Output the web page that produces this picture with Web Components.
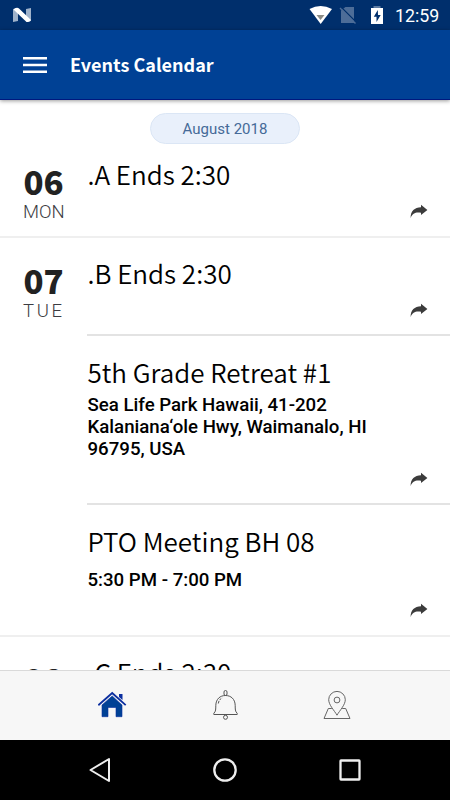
<!DOCTYPE html>
<html lang="en">
<head>
<meta charset="utf-8">
<title>Events Calendar</title>
<style>
    html, body {
        margin: 0;
        height: 100%;
        overflow: hidden;
        background: #fff;
    }
</style>
</head>
<body>
<calendar-app>
    <status-bar slot="top">12:59</status-bar>
    <app-header slot="top">Events Calendar</app-header>
    <month-pill>August 2018</month-pill>
    <event-day day="06" name="MON">
        <event-item heading=".A Ends 2:30"></event-item>
    </event-day>
    <event-day day="07" name="TUE" style="--name-spacing: 2.6px">
        <event-item heading=".B Ends 2:30" style="--pad-end: 16px"></event-item>
        <event-item heading="5th Grade Retreat #1" style="--pad-start: 18px; --pad-end: 16px">Sea Life Park Hawaii, 41-202 Kalaniana‘ole Hwy, Waimanalo, HI 96795, USA</event-item>
        <event-item heading="PTO Meeting BH 08" style="--pad-start: 18px; --detail-gap: 10px">5:30 PM - 7:00 PM</event-item>
    </event-day>
    <event-day day="08" name="WED">
        <event-item heading=".C Ends 2:30"></event-item>
    </event-day>
    <tab-bar slot="bottom"></tab-bar>
    <nav-bar slot="bottom"></nav-bar>
</calendar-app>

<script>
// attaches an open shadow root filled from a template
function render(el, html) {
    const template = document.createElement('template');
    template.innerHTML = html;
    el.attachShadow({mode: 'open'}).appendChild(template.content.cloneNode(true));
}

class CalendarApp extends HTMLElement {
    constructor() {
        super();
        render(this, `
            <style>
                :host {
                    display: flex;
                    flex-direction: column;
                    width: 450px;
                    height: 800px;
                    overflow: hidden;
                    background: #fff;
                    color: #000;
                    font-family: Roboto, sans-serif;
                }
                main {
                    flex: 1;
                    min-height: 0;
                    overflow: hidden;
                }
            </style>
            <slot name="top"></slot>
            <main><slot></slot></main>
            <slot name="bottom"></slot>`);
    }
}

class StatusBar extends HTMLElement {
    constructor() {
        super();
        render(this, `
            <style>
                :host {
                    display: flex;
                    align-items: center;
                    flex: none;
                    height: 30px;
                    box-sizing: border-box;
                    padding: 0 11px 0 12px;
                    background: #002f6c;
                    color: #fff;
                    font: 450 17.800px/30px Roboto, sans-serif;
                }
                .logo { margin-right: auto; }
                .clock { margin-left: 11px; padding-top: 2px; width: 44px; white-space: nowrap; }
                svg { display: block; }
            </style>
            <svg class="logo" width="22" height="30" viewBox="12 0 22 30">
                <path fill="#9fb2ca" d="M13 9l5-1v13l-5 1zM26 9l5-1v13l-5 1z"/>
                <path fill="#fff" d="M14 9q3-2 5-.5L31 20q-2 3-5 1.500L14 10z"/>
            </svg>
            <svg width="76" height="30" viewBox="308 0 76 30">
                <path fill="#fff" d="M309.500 9q11-6 22.500 0L320.700 24z"/>
                <path fill="#8c8c86" d="M316.500 15h8l-4 5z"/>
                <path fill="#4d6d98" d="M345.500 7h8.500v14.500zM341 11v12h11.500z"/>
                <path fill="#4d6d98" d="M342 9.500l3.500-2.500h8.500v16h-13V10.500z"/>
                <path fill="none" stroke="#002f6c" stroke-width="1.200" d="M342 8l14 14"/>
                <path fill="none" stroke="#4d6d98" stroke-width="1.400" d="M340 8l15.500 15.500"/>
                <path fill="#5d7ba2" d="M373.500 6h7v2h-7z"/>
                <path fill="#fff" d="M371 8h12v16h-12z"/>
                <path fill="#002f6c" d="M377.800 10l-4 6.800h2.700V22l4.200-7H378z"/>
            </svg>
            <span class="clock"><slot></slot></span>`);
    }
}

class AppHeader extends HTMLElement {
    constructor() {
        super();
        render(this, `
            <style>
                :host {
                    display: flex;
                    align-items: center;
                    flex: none;
                    position: relative;
                    z-index: 1;
                    box-sizing: border-box;
                    height: 70px;
                    padding-left: 23px;
                    gap: 23px;
                    background: #004195;
                    border-bottom: 1px solid #00187e;
                    box-shadow: 0 1px 4px rgba(0, 0, 0, .4);
                    color: #fff;
                    font: 700 18px/30px "Noto Sans CJK JP", sans-serif;
                }
                span { padding-bottom: 2px; }
            </style>
            <svg width="24" height="18" viewBox="0 0 24 18">
                <path fill="#fff" d="M0 1h24v2.500H0zM0 7.800h24v2.500H0zM0 14.600h24v2.500H0z"/>
            </svg>
            <span><slot></slot></span>`);
    }
}

class MonthPill extends HTMLElement {
    constructor() {
        super();
        render(this, `
            <style>
                :host {
                    display: block;
                    box-sizing: border-box;
                    width: 150px;
                    height: 31px;
                    margin: 13px auto -5px;
                    border: 1px solid #dbe6f5;
                    border-radius: 16px;
                    background: #e9f0fb;
                    color: #456a98;
                    font: 400 15px/31px Roboto, sans-serif;
                    text-align: center;
                }
            </style>
            <slot></slot>`);
    }
}

class EventDay extends HTMLElement {
    constructor() {
        super();
        render(this, `
            <style>
                :host {
                    display: flex;
                    border-bottom: 2px solid #efefef;
                }
                .date {
                    flex: none;
                    width: 87px;
                    box-sizing: border-box;
                    padding: 22px 0 0 23px;
                    color: #222;
                }
                .day {
                    width: 41px;
                    font: 900 33px/40px "Noto Sans CJK JP", sans-serif;
                    text-align: center;
                }
                .name {
                    margin-top: 1px;
                    color: #3c3c42;
                    font: 350 18.500px/20px Roboto, sans-serif;
                    letter-spacing: var(--name-spacing, 0);
                    white-space: nowrap;
                }
                .events {
                    flex: 1;
                    min-width: 0;
                }
                ::slotted(:not(:last-child)) {
                    border-bottom: 2px solid #e3e3e3;
                }
            </style>
            <div class="date">
                <div class="day">${this.getAttribute('day')}</div>
                <div class="name">${this.getAttribute('name')}</div>
            </div>
            <div class="events"><slot></slot></div>`);
    }
}

class EventItem extends HTMLElement {
    constructor() {
        super();
        render(this, `
            <style>
                :host {
                    display: block;
                    padding: var(--pad-start, 17px) 22px var(--pad-end, 17px) 0;
                }
                .heading {
                    padding-left: .4px;
                    font: 350 26px/36px "Noto Sans CJK JP", sans-serif;
                    white-space: nowrap;
                }
                .detail {
                    width: 300px;
                    padding-left: .5px;
                    margin-top: var(--detail-gap, 4px);
                    font: 500 18.650px/22px Roboto, sans-serif;
                }
                .share {
                    display: block;
                    margin: 12px 0 0 auto;
                }
            </style>
            <div class="heading">${this.getAttribute('heading')}</div>
            ${this.textContent.trim() ? '<div class="detail"><slot></slot></div>' : ''}
            <svg class="share" width="18" height="15" viewBox="0 0 18 15">
                <path fill="#3c3c3c" d="M.6 14C.6 7 4.500 3.500 11 3.300V.8l6.400 5.100-6.400 5V8.800C6 8 2.500 9 .6 14z"/>
            </svg>`);
    }
}

class TabBar extends HTMLElement {
    constructor() {
        super();
        render(this, `
            <style>
                :host {
                    display: flex;
                    justify-content: center;
                    align-items: center;
                    gap: 82px;
                    flex: none;
                    box-sizing: border-box;
                    height: 70px;
                    background: #f7f7f7;
                    border-top: 1px solid #dadada;
                }
            </style>
            <svg width="30" height="32" viewBox="98 690 30 32">
                <path fill="none" stroke="#0c2fa0" stroke-width="1.800" d="M98.300 705.200L112.200 693l13.500 12.200"/>
                <path fill="#0c2fa0" d="M119 694h3.500v6l-3.500-3z"/>
                <path fill="#004195" stroke="#0c2fa0" stroke-width=".6" d="M102 705l10.200-9 9.800 9v11.700h-6V707.500h-8v9.200h-6z"/>
            </svg>
            <svg width="30" height="32" viewBox="210 690 30 32" fill="none" stroke="#555" stroke-width="1">
                <rect x="224" y="690.500" width="3" height="5" rx="1.500"/>
                <path d="M213.800 714.500v-1.200c2.200-2 1.900-4 2-8 .2-6.200 4.200-9.800 9.700-9.800s9.500 3.600 9.700 9.800c.1 4-.2 6 2 8v1.200z"/>
                <path d="M218.300 703.500c.4-2.700 1.500-4.500 4-5.500" stroke-dasharray="2.500 1"/>
                <circle cx="225.500" cy="717.300" r="2"/>
            </svg>
            <svg width="30" height="32" viewBox="322.500 690 30 32" fill="none" stroke="#666" stroke-width="1">
                <path d="M337.500 715.200c-2.500-4.500-8.300-10.200-8.300-15.500a8.300 8.300 0 0 1 16.600 0c0 5.300-5.800 11-8.300 15.500z"/>
                <circle cx="337.500" cy="700" r="2.900"/>
                <path d="M332.300 708.500h-3.500l-4.300 10h26l-4.300-10h-3.500"/>
            </svg>`);
    }
}

class NavBar extends HTMLElement {
    constructor() {
        super();
        render(this, `
            <style>
                :host {
                    display: flex;
                    justify-content: center;
                    align-items: center;
                    gap: 95px;
                    flex: none;
                    height: 60px;
                    background: #000;
                }
            </style>
            <svg width="30" height="30" viewBox="0 0 30 30"><path fill="none" stroke="#eee" stroke-width="2" stroke-linejoin="round" d="M24 4v22L5.500 15z"/></svg>
            <svg width="30" height="30" viewBox="0 0 30 30"><circle cx="15" cy="15" r="10.700" fill="none" stroke="#eee" stroke-width="2.300"/></svg>
            <svg width="30" height="30" viewBox="0 0 30 30"><rect x="5.500" y="5.500" width="19" height="19" rx=".5" fill="none" stroke="#eee" stroke-width="2.300"/></svg>`);
    }
}

window.customElements.define('calendar-app', CalendarApp);
window.customElements.define('status-bar', StatusBar);
window.customElements.define('app-header', AppHeader);
window.customElements.define('month-pill', MonthPill);
window.customElements.define('event-day', EventDay);
window.customElements.define('event-item', EventItem);
window.customElements.define('tab-bar', TabBar);
window.customElements.define('nav-bar', NavBar);
</script>
</body>
</html>
